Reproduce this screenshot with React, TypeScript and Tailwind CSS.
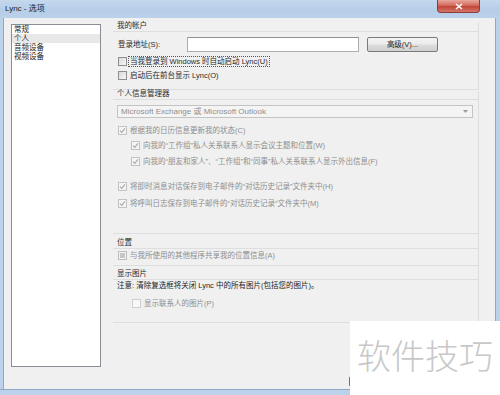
import React from 'react';

type BoxKind = 'empty' | 'checked' | 'filled' | 'off';

const Box: React.FC<{ kind: BoxKind }> = ({ kind }) => {
  if (kind === 'empty') {
    return <span className="w-[9px] h-[9px] shrink-0 border border-[#8f8f8f] bg-gradient-to-br from-[#d8d8d8] to-[#f8f8f8]" />;
  }
  if (kind === 'checked') {
    return (
      <span className="w-[9px] h-[9px] shrink-0 border border-[#c2c2c2] bg-[#f5f5f5] flex items-center justify-center">
        <svg width="7" height="7" viewBox="0 0 7 7">
          <path d="M1 3.6 L2.8 5.4 L6 1.3" stroke="#a9a9a9" strokeWidth="1.1" fill="none" />
        </svg>
      </span>
    );
  }
  if (kind === 'filled') {
    return (
      <span className="w-[9px] h-[9px] shrink-0 border border-[#bdbdbd] bg-[#f3f3f3] p-[1px]">
        <span className="block w-full h-full bg-[#c6c6c6]" />
      </span>
    );
  }
  return <span className="w-[9px] h-[9px] shrink-0 border border-[#cfcfcf] bg-[#f8f8f8]" />;
};

const Check: React.FC<{ kind: BoxKind; label: string; dim?: boolean; className?: string; focus?: boolean }> = ({
  kind,
  label,
  dim,
  className = '',
  focus,
}) => (
  <div className={`flex items-center h-[10px] ${className}`}>
    <Box kind={kind} />
    <span
      className={`ml-[1px] px-[1px] leading-[9px] whitespace-nowrap ${dim ? 'text-[#8e8e8e]' : 'text-[#2a2a2a]'} ${
        focus ? 'border border-dotted border-[#555]' : 'border border-transparent'
      }`}
    >
      {label}
    </span>
  </div>
);

const Header: React.FC<{ title: string; h: string }> = ({ title, h }) => (
  <div className={`${h} flex items-end border-b border-[#dedede]`}>
    <span className="pl-[4px] leading-[10px] text-[#2a2a2a]">{title}</span>
  </div>
);

const App: React.FC = () => {
  return (
    <div className="w-[500px] h-[395px] overflow-hidden relative flex flex-col bg-[#bcd2ea] font-['Liberation_Sans','Noto_Sans_CJK_SC',sans-serif] text-[7.5px]">
      {/* title bar */}
      <div className="h-[18px] flex items-start bg-[linear-gradient(180deg,#c4d8ee_0%,#b6cde8_60%,#bcd2ea_100%)]">
        <span className="pl-[5px] pt-[4px] text-[8px] leading-[9px] text-[#1a1a1a]">Lync - 选项</span>
        <div className="ml-auto mr-[20px] w-[43px] h-[13px] rounded-b-[4px] border border-t-0 border-[#8b3b3b] bg-[linear-gradient(180deg,#e9a79c_0%,#d26a5c_45%,#c0463a_55%,#d4776a_100%)] flex items-center justify-center">
          <svg width="8" height="7" viewBox="0 0 8 7">
            <path d="M1 1 L7 6 M7 1 L1 6" stroke="#ffffff" strokeWidth="1.6" />
          </svg>
        </div>
      </div>

      <div className="flex flex-1">
        <div className="w-[4px] border-r border-[#8fa8c6]" />

        {/* client area */}
        <div className="w-[491px] bg-[#f0f0f0] flex flex-col">
          <div className="flex items-start h-[354px]">
            {/* page list */}
            <div className="ml-[7px] mt-[6px] w-[90px] h-[343px] border border-[#8a8d94] bg-white pt-0">
              <div className="h-[9px] pl-[2px] leading-[9px] text-[#222]">常规</div>
              <div className="h-[9px] pl-[2px] leading-[9px] text-[#222] bg-[#e8e8e8]">个人</div>
              <div className="h-[9px] pl-[2px] leading-[9px] text-[#222]">音频设备</div>
              <div className="h-[9px] pl-[2px] leading-[9px] text-[#222]">视频设备</div>
            </div>

            {/* settings */}
            <div className="ml-[12px] mt-[4px] w-[366px] flex flex-col">
              {/* 我的帐户 */}
              <div className="border-r border-b border-[#dedede] pb-[9px]">
                <Header title="我的帐户" h="h-[10px]" />
                <div className="mt-[5px] h-[15px] flex items-center">
                  <span className="pl-[5px] w-[74px] text-[#2a2a2a]">登录地址(S):</span>
                  <div className="w-[172px] h-[15px] border border-[#abadb3] border-t-[#8d9096] bg-white" />
                  <div className="ml-[8px] w-[71px] h-[15px] rounded-[2px] border border-[#7a7a7a] bg-[linear-gradient(180deg,#f4f4f4_0%,#ebebeb_48%,#dddddd_52%,#d0d0d0_100%)] flex items-center justify-center text-[#222]">
                    高级(V)...
                  </div>
                </div>
                <Check kind="empty" label="当我登录到 Windows 时自动启动 Lync(U)" focus className="mt-[4px] pl-[5px]" />
                <Check kind="empty" label="启动后在前台显示 Lync(O)" className="mt-[4px] pl-[5px]" />
              </div>

              {/* 个人信息管理器 */}
              <div className="mt-[1px] border-r border-b border-[#dedede] pb-[25px]">
                <Header title="个人信息管理器" h="h-[9px]" />
                <div className="mt-[5px] ml-[4px] mr-[5px] h-[13px] border border-[#c4c4c4] bg-[#f4f4f4] flex items-center">
                  <span className="pl-[3px] text-[8px] text-[#8e8e8e]">Microsoft Exchange 或 Microsoft Outlook</span>
                  <svg className="ml-auto mr-[4px]" width="5" height="3" viewBox="0 0 5 3">
                    <path d="M0 0 L5 0 L2.5 3 Z" fill="#9a9a9a" />
                  </svg>
                </div>
                <Check kind="checked" dim label="根据我的日历信息更新我的状态(C)" className="mt-[7px] pl-[5px]" />
                <Check kind="checked" dim label="向我的“工作组”私人关系联系人显示会议主题和位置(W)" className="mt-[5px] pl-[18px]" />
                <Check
                  kind="checked"
                  dim
                  label="向我的“朋友和家人”、“工作组”和“同事”私人关系联系人显示外出信息(F)"
                  className="mt-[6px] pl-[18px]"
                />
                <Check kind="checked" dim label="将即时消息对话保存到电子邮件的“对话历史记录”文件夹中(H)" className="mt-[15px] pl-[5px]" />
                <Check kind="checked" dim label="将呼叫日志保存到电子邮件的“对话历史记录”文件夹中(M)" className="mt-[7px] pl-[5px]" />
              </div>

              {/* 位置 */}
              <div className="border-r border-b border-[#dedede] pb-[5px]">
                <Header title="位置" h="h-[15px]" />
                <Check kind="filled" dim label="与我所使用的其他程序共享我的位置信息(A)" className="mt-[1px] pl-[5px]" />
              </div>

              {/* 显示图片 */}
              <div className="border-r border-b border-[#dedede] pb-[14px]">
                <Header title="显示图片" h="h-[14px]" />
                <div className="mt-[1px] h-[10px] flex items-center pl-[4px] text-[#1e1e1e]">
                  注意: 清除复选框将关闭 Lync 中的所有图片(包括您的图片)。
                </div>
                <Check kind="off" dim label="显示联系人的图片(P)" className="mt-[7px] pl-[19px]" />
              </div>
            </div>
          </div>

          {/* dialog buttons, mostly hidden under the watermark */}
          <div className="mt-[4px] pl-[345px] flex gap-[6px]">
            <div className="w-[70px] h-[11px] rounded-[2px] border border-[#3c7fb1] bg-[#e5f1fb]" />
            <div className="w-[70px] h-[11px] rounded-[2px] border border-[#707070] bg-[#e5e5e5]" />
          </div>
        </div>

        <div className="w-[5px] border-l border-[#8fa8c6]" />
      </div>
      <div className="h-[6px] border-t border-[#8fa8c6]" />

      {/* watermark */}
      <div className="absolute left-[350px] top-[321px] w-[150px] h-[74px] bg-white flex items-center justify-center">
        <span className="text-[34px] leading-none text-[#c8c8c8] font-['Noto_Sans_CJK_SC',sans-serif] font-light -mt-[6px]">
          软件技巧
        </span>
      </div>
    </div>
  );
};

export default App;
